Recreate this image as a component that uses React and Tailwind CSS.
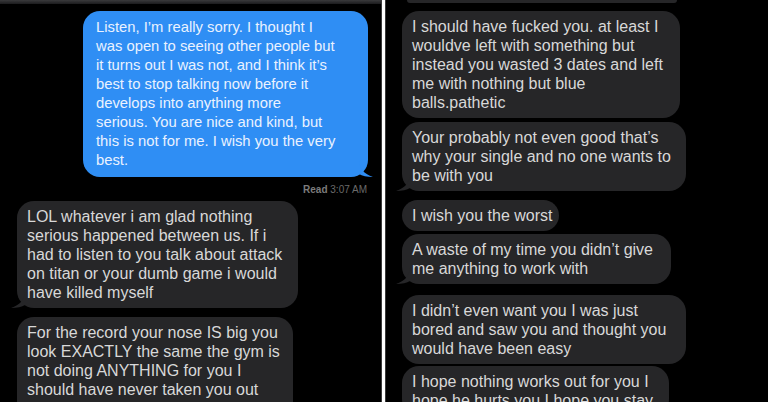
import React from 'react';

const font = { fontFamily: '"Liberation Sans", Arial, sans-serif' };

function Tail({ side, color }) {
  if (side === 'right') {
    return (
      <svg className="absolute bottom-0 right-[-5px]" width="14" height="16" viewBox="0 0 14 16">
        <path d="M0 0 C1 8 5 13 14 16 C8 16 3 15 0 13 Z" fill={color} />
      </svg>
    );
  }
  return (
    <svg className="absolute bottom-0 left-[-6px]" width="14" height="16" viewBox="0 0 14 16">
      <path d="M14 0 C13 8 9 13 0 16 C6 16 11 15 14 13 Z" fill={color} />
    </svg>
  );
}

function Gray({ lines, w, className = '', tail, pad = 'pb-[6px]' }) {
  return (
    <div className={`relative ${className}`} style={{ width: w }}>
      <div className={`rounded-[17px] bg-[#262628] px-[10px] pt-[6px] ${pad} text-[16px] leading-[19px] text-[#d8d8d8]`}>
        {lines.map((l, i) => (
          <div key={i} className="whitespace-nowrap">{l}</div>
        ))}
      </div>
      {tail && <Tail side="left" color="#262628" />}
    </div>
  );
}

export default function App() {
  return (
    <div className="flex h-[402px] w-[768px] overflow-hidden bg-black" style={font}>
      {/* left screenshot */}
      <div className="w-[382px] shrink-0 border-r border-[#3a3a3a]">
        <div className="h-[4px] bg-gradient-to-b from-[#3a3a3c] to-[#1c1c1e]" />
        <div className="relative ml-[83px] mt-[7px] w-[285px]">
          <div className="rounded-[17px] bg-[#2f8ef4] px-[13px] py-[7px] text-[14.8px] leading-[19px] text-[#eaf2ff]">
            <div className="whitespace-nowrap">Listen, I’m really sorry. I thought I</div>
            <div className="whitespace-nowrap">was open to seeing other people but</div>
            <div className="whitespace-nowrap">it turns out I was not, and I think it’s</div>
            <div className="whitespace-nowrap">best to stop talking now before it</div>
            <div className="whitespace-nowrap">develops into anything more</div>
            <div className="whitespace-nowrap">serious. You are nice and kind, but</div>
            <div className="whitespace-nowrap">this is not for me. I wish you the very</div>
            <div className="whitespace-nowrap">best.</div>
          </div>
          <Tail side="right" color="#2f8ef4" />
        </div>
        <div className="mr-[14px] mt-[7px] text-right text-[10px] leading-[12px] text-[#6a6a6a]">
          <span className="font-bold text-[#7c7c7c]">Read</span> 3:07 AM
        </div>
        <Gray
          className="ml-[17px] mt-[5px]"
          w={281}
          tail
          lines={[
            'LOL whatever i am glad nothing',
            'serious happened between us. If i',
            'had to listen to you talk about attack',
            'on titan or your dumb game i would',
            'have killed myself',
          ]}
        />
        <Gray
          className="ml-[17px] mt-[9px]"
          w={276}
          pad="pb-[20px]"
          lines={[
            'For the record your nose IS big you',
            'look EXACTLY the same the gym is',
            'not doing ANYTHING for you I',
            'should have never taken you out',
          ]}
        />
      </div>
      {/* divider */}
      <div className="w-[3px] shrink-0 bg-white" />
      {/* right screenshot */}
      <div className="flex-1 border-l border-[#3a3a3a]">
        <div className="ml-[21px] h-[3px] w-[270px] rounded-b-[6px] bg-[#262628]" />
        <Gray
          className="ml-[16px] mt-[8px]"
          w={278}
          lines={[
            'I should have fucked you. at least I',
            'wouldve left with something but',
            'instead you wasted 3 dates and left',
            'me with nothing but blue',
            'balls.pathetic',
          ]}
        />
        <Gray
          className="ml-[16px] mt-[4px]"
          w={284}
          tail
          lines={[
            'Your probably not even good that’s',
            'why your single and no one wants to',
            'be with you',
          ]}
        />
        <Gray className="ml-[16px] mt-[9px]" w={157} lines={['I wish you the worst']} />
        <Gray
          className="ml-[16px] mt-[3px]"
          w={269}
          tail
          lines={['A waste of my time you didn’t give', 'me anything to work with']}
        />
        <Gray
          className="ml-[16px] mt-[11px]"
          w={284}
          lines={[
            'I didn’t even want you I was just',
            'bored and saw you and thought  you',
            'would have been easy',
          ]}
        />
        <Gray
          className="ml-[16px] mt-[2px]"
          w={267}
          lines={[
            'I hope nothing works out for you I',
            'hope he hurts you I hope you stay',
          ]}
        />
      </div>
    </div>
  );
}
